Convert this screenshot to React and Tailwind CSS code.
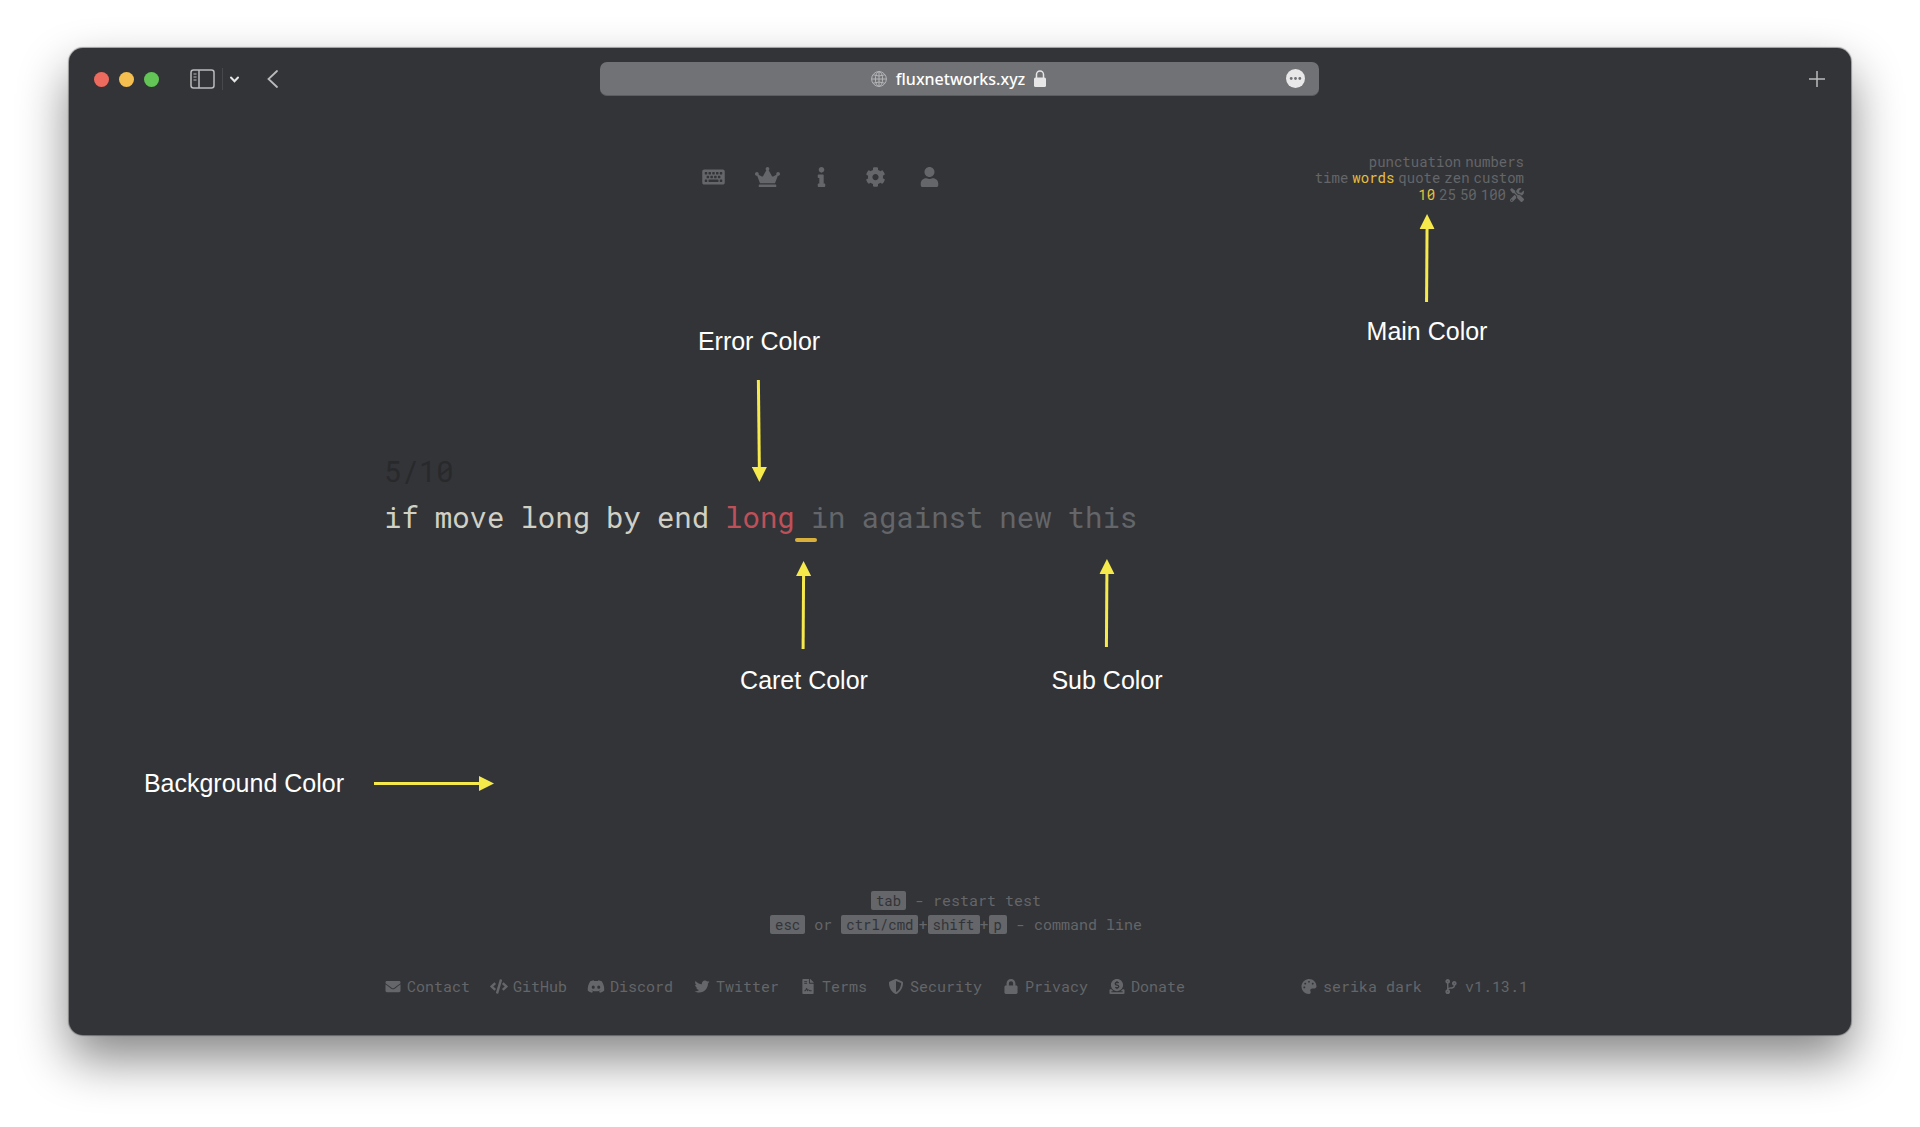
import {
  FaKeyboard, FaCrown, FaInfo, FaCog, FaUser, FaTools, FaEnvelope, FaCode, FaDiscord, FaTwitter,
  FaFileContract, FaShieldAlt, FaLock, FaDonate, FaPalette, FaCodeBranch,
} from "react-icons/fa";

const nav = [
  ["Start test", FaKeyboard],
  ["Leaderboards", FaCrown],
  ["About", FaInfo],
  ["Settings", FaCog],
  ["Account", FaUser],
];

const links = [
  ["Contact", FaEnvelope],
  ["GitHub", FaCode],
  ["Discord", FaDiscord],
  ["Twitter", FaTwitter],
  ["Terms", FaFileContract],
  ["Security", FaShieldAlt],
  ["Privacy", FaLock],
  ["Donate", FaDonate],
];

const typed = ["if", "move", "long", "by", "end"];
const upcoming = ["in", "against", "new", "this"];

function Toolbar() {
  return (
    <header className="grid h-[62px] grid-cols-[1fr_minmax(0,719px)_1fr] items-center pr-[26px] pl-6 text-[#b9babc]">
      <div className="flex items-center pl-px">
        <div className="flex gap-[10px]">
          <button aria-label="Close" className="size-[15px] rounded-full bg-[#ed6a5f]" />
          <button aria-label="Minimize" className="size-[15px] rounded-full bg-[#f5bf4f]" />
          <button aria-label="Zoom" className="size-[15px] rounded-full bg-[#62c555]" />
        </div>
        <button aria-label="Sidebar" className="ml-[31px]">
          <svg className="h-5 w-[25px]" viewBox="0 0 25 20" fill="none" stroke="currentColor" strokeWidth="1.5">
            <rect x="1" y="1" width="23" height="18" rx="2.5" />
            <path d="M9 1v18" />
            <path d="M3.5 5h3M3.5 8h3M3.5 11h3" strokeWidth="1.1" />
          </svg>
        </button>
        <div className="mx-[7px] h-[22px] w-px bg-[#47484c]" />
        <button aria-label="Tab groups" className="text-[#e6e6e7]">
          <svg className="h-[7px] w-[9px]" viewBox="0 0 9 7" fill="none" stroke="currentColor" strokeWidth="2">
            <path d="M1 1.5l3.5 3.7L8 1.5" strokeLinecap="round" />
          </svg>
        </button>
        <button aria-label="Back" className="ml-7">
          <svg className="h-[18px] w-[11px]" viewBox="0 0 11 18" fill="none" stroke="currentColor" strokeWidth="1.8">
            <path d="M10 1L1.5 9l8.5 8" strokeLinecap="round" />
          </svg>
        </button>
      </div>
      <div className="flex h-[34px] items-center rounded-[7px] border-b border-[#5c5d61] bg-[#717276] px-[14px]">
        <div className="w-[18px]" />
        <button className="flex flex-1 items-center justify-center gap-[9px] font-['Noto_Sans','Open_Sans',sans-serif] text-[16px] font-medium text-white">
          <svg className="size-4" viewBox="0 0 16 16" fill="none" stroke="#b4b5b7" strokeWidth="1">
            <circle cx="8" cy="8" r="7.4" />
            <ellipse cx="8" cy="8" rx="3.6" ry="7.4" />
            <path d="M8 .6v14.8M.6 8h14.8M2.2 3.8q5.8 2.4 11.6 0M2.2 12.2q5.8-2.4 11.6 0" />
          </svg>
          <span>fluxnetworks.xyz</span>
          <svg className="h-[17px] w-3" viewBox="0 0 12 17">
            <path d="M2.5 8V4.5a3.5 3.5 0 0 1 7 0V8" fill="none" stroke="#e6e6e6" strokeWidth="1.5" />
            <rect y="7.5" width="12" height="9.5" rx="1.5" fill="#e6e6e6" />
          </svg>
        </button>
        <button aria-label="Page menu">
          <svg className="size-[19px]" viewBox="0 0 19 19">
            <circle cx="9.5" cy="9.5" r="9.5" fill="#e8e8e8" />
            <g fill="#717276">
              <circle cx="5.2" cy="9.5" r="1.4" />
              <circle cx="9.5" cy="9.5" r="1.4" />
              <circle cx="13.8" cy="9.5" r="1.4" />
            </g>
          </svg>
        </button>
      </div>
      <button aria-label="New tab" className="justify-self-end">
        <svg className="size-4" viewBox="0 0 16 16" fill="none" stroke="currentColor" strokeWidth="1.5">
          <path d="M8 0v16M0 8h16" />
        </svg>
      </button>
    </header>
  );
}

function Option({ active, children }) {
  return <button className={active ? "text-[#e8c03e]" : ""}>{children}</button>;
}

function Key({ children }) {
  return (
    <kbd className="rounded-[2px] bg-[#646669] px-[5px] font-[inherit] text-[14px] leading-[18px] text-[#333438]">
      {children}
    </kbd>
  );
}

function FooterLink({ icon: Icon, children }) {
  return (
    <a href="#" className="flex items-center gap-[5px]">
      <Icon className="h-[15px] w-[18px]" />
      {children}
    </a>
  );
}

function UpArrow() {
  return (
    <svg className="h-[88px] w-[15px]" viewBox="0 0 15 88">
      <path d="M7 88L7.5 12" stroke="#f6e94b" strokeWidth="3" />
      <path d="M7.5 0L15 15H0z" fill="#f6e94b" />
    </svg>
  );
}

function DownArrow() {
  return (
    <svg className="h-[102px] w-[15px]" viewBox="0 0 15 102">
      <path d="M6.5 0L7.5 90" stroke="#f6e94b" strokeWidth="3" />
      <path d="M7.5 102L15 87H0z" fill="#f6e94b" />
    </svg>
  );
}

function RightArrow() {
  return (
    <svg className="h-[15px] w-[120px]" viewBox="0 0 120 15">
      <path d="M0 7.5H108" stroke="#f6e94b" strokeWidth="3" />
      <path d="M120 7.5L105 0v15z" fill="#f6e94b" />
    </svg>
  );
}

function Annotations() {
  return (
    <div className="font-['Liberation_Sans',Arial,sans-serif] text-[25px] leading-[28px] whitespace-nowrap text-white">
      <div className="absolute top-[104px] left-[1043px] flex -translate-x-1/2 flex-col items-center gap-[15px]">
        <UpArrow />
        <span>Main Color</span>
      </div>
      <div className="absolute top-[217px] left-[375px] flex -translate-x-1/2 flex-col items-center gap-[25px]">
        <span>Error Color</span>
        <DownArrow />
      </div>
      <div className="absolute top-[451px] left-[420px] flex -translate-x-1/2 flex-col items-center gap-[17px]">
        <UpArrow />
        <span>Caret Color</span>
      </div>
      <div className="absolute top-[449px] left-[723px] flex -translate-x-1/2 flex-col items-center gap-[19px]">
        <UpArrow />
        <span>Sub Color</span>
      </div>
      <div className="absolute top-[659px] right-[1034px] flex items-center gap-[30px]">
        <span>Background Color</span>
        <RightArrow />
      </div>
    </div>
  );
}

export default function App() {
  return (
    <div className="min-h-screen overflow-hidden bg-white px-[69px] pt-12 pb-[92px]">
      <div className="rounded-[14px] bg-[#333438] shadow-[0_0_1px_1px_rgba(0,0,0,0.35),0_24px_50px_rgba(0,0,0,0.48)]">
        <Toolbar />
        <div className="pr-2">
          <div className="relative mx-auto max-w-[1144px] pt-11 pb-[39px] font-['Roboto_Mono','Liberation_Mono',monospace] text-[15px] text-[#646669]">
            <div className="flex items-start justify-between pr-1 pl-[317px]">
              <nav className="flex gap-[29px] pt-[13px]">
                {nav.map(([label, Icon]) => (
                  <a key={label} href="#" aria-label={label}>
                    <Icon className="h-5 w-[25px]" />
                  </a>
                ))}
              </nav>
              <div className="flex flex-col text-[14px] leading-4">
                <div className="flex justify-end gap-1">
                  <Option>punctuation</Option>
                  <Option>numbers</Option>
                </div>
                <div className="flex justify-end gap-1">
                  <Option>time</Option>
                  <Option active>words</Option>
                  <Option>quote</Option>
                  <Option>zen</Option>
                  <Option>custom</Option>
                </div>
                <div className="flex h-[18px] items-center justify-end gap-1">
                  <Option active>10</Option>
                  <Option>25</Option>
                  <Option>50</Option>
                  <Option>100</Option>
                  <button aria-label="Custom amount">
                    <FaTools className="size-[14px]" />
                  </button>
                </div>
              </div>
            </div>

            <main className="mt-[246px] text-[29px]">
              <div className="leading-[42px] text-[#28292b]">5/10</div>
              <div className="flex flex-wrap gap-x-4 leading-[50px]">
                {typed.map((word) => (
                  <span key={word} className="text-[#d1d0c5]">{word}</span>
                ))}
                <span className="relative text-[#c05058]">
                  long
                  <span className="absolute top-[46px] left-full h-1 w-[22px] rounded-full bg-[#d9b03c]" />
                </span>
                {upcoming.map((word) => (
                  <span key={word}>{word}</span>
                ))}
              </div>
            </main>

            <div className="mt-[346px] text-center leading-6">
              <div><Key>tab</Key> - restart test</div>
              <div>
                <Key>esc</Key> or <Key>ctrl/cmd</Key>+<Key>shift</Key>+<Key>p</Key> - command line
              </div>
            </div>

            <footer className="mt-10 flex justify-between leading-5">
              <div className="flex gap-5">
                {links.map(([label, Icon]) => (
                  <FooterLink key={label} icon={Icon}>{label}</FooterLink>
                ))}
              </div>
              <div className="flex gap-5">
                <FooterLink icon={FaPalette}>serika dark</FooterLink>
                <FooterLink icon={FaCodeBranch}>v1.13.1</FooterLink>
              </div>
            </footer>

            <Annotations />
          </div>
        </div>
      </div>
    </div>
  );
}
